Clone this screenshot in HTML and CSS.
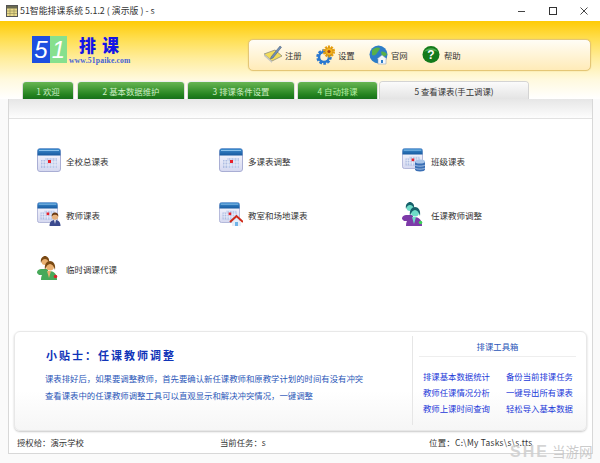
FILE: index.html
```html
<!DOCTYPE html>
<html lang="zh-CN">
<head>
<meta charset="utf-8">
<title>51智能排课系统</title>
<link rel="stylesheet" href="styles.css">
</head>
<body>
<svg class="defs" width="0" height="0" aria-hidden="true">
  <defs>
    <linearGradient id="calHead" x1="0" y1="0" x2="0" y2="1"><stop offset="0" stop-color="#3f8fd0"/><stop offset="1" stop-color="#17599f"/></linearGradient>
    <linearGradient id="calBody" x1="0" y1="0" x2="0" y2="1"><stop offset="0" stop-color="#fbfbff"/><stop offset="1" stop-color="#d5d8f0"/></linearGradient>
    <symbol id="cal" viewBox="0 0 24 24">
      <rect x="0.5" y="0.5" width="23" height="23" rx="2.5" fill="url(#calBody)" stroke="#a9aed4"/>
      <path d="M0.5 7.500V3a2.500 2.500 0 0 1 2.500-2.500h18A2.500 2.500 0 0 1 23.500 3v4.500z" fill="url(#calHead)"/>
      <path d="M2 2.500h20" stroke="#8cc2ec" stroke-width="1"/>
      <rect x="4" y="12" width="16" height="8" fill="#aebde2"/>
      <rect x="8" y="10" width="12" height="10" fill="#bccaea"/>
      <path d="M6 12v8M9 10v10M12 10v10M15 10v10M18 10v10M4 14h16M4 17h16" stroke="#f2f4fc" stroke-width="0.800"/>
      <rect x="11" y="12" width="3" height="3" fill="#e8202a"/>
    </symbol>
    <symbol id="person" viewBox="0 0 12 14">
      <path d="M0.500 14c0-4 2-6 5.500-6s5.500 2 5.500 6z" fill="#3b4a8e"/>
      <path d="M5 8l1 4 1-4z" fill="#e8e8f0"/>
      <circle cx="6" cy="4.500" r="3.200" fill="#e6b17c"/>
      <path d="M2.700 4.500C2.500 1.500 4 .5 6 .5s3.500 1 3.300 4C8.500 3 7 2.700 6 2.700S3.500 3 2.700 4.500z" fill="#6b3a12"/>
    </symbol>
    <symbol id="pair" viewBox="0 0 24 24">
      <path d="M0 17c0-3 2-4 5-4h6v6H2z" fill="var(--cloth)"/>
      <circle cx="8" cy="5.500" r="3.500" fill="var(--skin)"/>
      <path d="M4 7C3 2 6 0 8 0s5 2 4 7c-1-3-2-4-4-4S5 4 4 7z" fill="var(--hair)"/>
      <path d="M4 24c0-6 3-9 8-9s8 3 8 9z" fill="var(--cloth)"/>
      <path d="M10 15l2 7 2-7z" fill="var(--skin)"/>
      <circle cx="13" cy="10.500" r="4" fill="var(--skin)"/>
      <path d="M8 14C7 8 10 5 13 5s6 3 5 9c-1-4-3-6-5-6s-4 2-5 6z" fill="var(--hair)"/>
      <circle cx="18.500" cy="20.500" r="1.800" fill="var(--dot)"/>
    </symbol>
  </defs>
</svg>

<div class="app">
  <div class="titlebar">
    <svg class="title-icon" viewBox="0 0 12 12" aria-hidden="true">
      <rect x="0.500" y="0.500" width="11" height="11" fill="#e9d98a" stroke="#555"/>
      <rect x="1" y="1" width="10" height="2.500" fill="#6a6a50"/>
      <path d="M1 6h10M1 8.500h10M4 3.500V11M8 3.500V11" stroke="#8f8a55" stroke-width="0.600"/>
    </svg>
    <span class="title-text">51智能排课系统 5.1.2 ( 演示版 ) - s</span>
    <div class="win-controls">
      <svg class="win-btn" viewBox="0 0 10 10" aria-hidden="true"><path d="M1 5.500h7" stroke="#444" stroke-width="1"/></svg>
      <svg class="win-btn" viewBox="0 0 10 10" aria-hidden="true"><rect x="1.500" y="1.500" width="7" height="7" fill="none" stroke="#333" stroke-width="1"/></svg>
      <svg class="win-btn" viewBox="0 0 10 10" aria-hidden="true"><path d="M1.500 1.500l7 7M8.500 1.500l-7 7" stroke="#333" stroke-width="0.900"/></svg>
    </div>
  </div>

  <div class="hero">
    <div class="hero-top">
      <div class="logo">
        <div class="logo-mark"><span class="logo-5">5</span><span class="logo-1">1</span></div>
        <div class="logo-words">
          <div class="logo-cn">排 课</div>
          <div class="logo-url">www.51paike.com</div>
        </div>
      </div>
      <div class="toolbar">
        <div class="tool">
          <svg class="tool-icon" viewBox="0 0 20 20" aria-hidden="true">
            <path d="M1 9l11-4 7 6-10 5z" fill="#f1dc5a" stroke="#8d8d80" stroke-width="0.800"/>
            <path d="M1 9l8 7v2L1 11z" fill="#c7c7c0"/>
            <path d="M8 12L17 1l1.500 1.200L10 13l-2.500 1z" fill="#6f8fb8" stroke="#44566e" stroke-width="0.500"/>
          </svg>
          <span>注册</span>
        </div>
        <div class="tool">
          <svg class="tool-icon" viewBox="0 0 20 20" aria-hidden="true">
            <circle cx="8" cy="12" r="6" fill="none" stroke="#2a78d0" stroke-width="3.500" stroke-dasharray="2.400 1.300"/>
            <circle cx="8" cy="12" r="5" fill="none" stroke="#2a78d0" stroke-width="2.500"/>
            <circle cx="13" cy="6.500" r="4.800" fill="none" stroke="#e8a010" stroke-width="2.500" stroke-dasharray="2 1"/>
            <circle cx="13" cy="6.500" r="4" fill="#f2b41e" stroke="#c57c08" stroke-width="0.600"/>
            <circle cx="13" cy="6.500" r="1.600" fill="#a8420e"/>
          </svg>
          <span>设置</span>
        </div>
        <div class="tool">
          <svg class="tool-icon" viewBox="0 0 20 20" aria-hidden="true">
            <circle cx="9.500" cy="9.500" r="9" fill="#2d7dc8"/>
            <path d="M3 5c3-3 6-3 8-2 0 2-2 3-3 5s-3 3-5 2z M12 7c2-1 4 0 6 2-1 2-3 3-5 2z" fill="#58b04a"/>
            <path d="M8 14l5-4 5 4h-1v5H9v-5z" fill="#f4f7fb" stroke="#7d97b5" stroke-width="0.500"/>
            <rect x="12" y="15" width="2" height="3" fill="#2d7dc8"/>
          </svg>
          <span>官网</span>
        </div>
        <div class="tool">
          <svg class="tool-icon help" viewBox="0 0 20 20" aria-hidden="true">
            <circle cx="9" cy="9.500" r="8.500" fill="#137a1a"/>
            <path d="M2 7a7.500 6 0 0 1 14 0c-4-2-10-2-14 0z" fill="#4cab50"/>
            <text x="9" y="14" class="help-q">?</text>
          </svg>
          <span>帮助</span>
        </div>
      </div>
    </div>
    <div class="tabs">
      <div class="tab tab-1">1 欢迎</div>
      <div class="tab tab-2">2 基本数据维护</div>
      <div class="tab tab-2">3 排课条件设置</div>
      <div class="tab tab-4">4 自动排课</div>
      <div class="tab tab-active">5 查看课表(手工调课)</div>
    </div>
  </div>

  <div class="panel">
    <div class="panel-strip"></div>
    <div class="grid">
      <div class="item"><svg class="item-icon"><use href="#cal"/></svg><span>全校总课表</span></div>
      <div class="item"><svg class="item-icon"><use href="#cal"/></svg><span>多课表调整</span></div>
      <div class="item">
        <svg class="item-icon" viewBox="0 0 24 24">
          <use href="#cal" width="21" height="21"/>
          <path d="M13 13.500v8c0 1 2 2 5 2s5-1 5-2v-8z" fill="#3a6fb5"/>
          <ellipse cx="18" cy="13.500" rx="5" ry="2" fill="#a9c6ea"/>
          <path d="M13 17c1 1.500 9 1.500 10 0M13 20c1 1.500 9 1.500 10 0" stroke="#cfe0f5" fill="none" stroke-width="0.700"/>
        </svg>
        <span>班级课表</span>
      </div>
      <div class="item">
        <svg class="item-icon" viewBox="0 0 24 24">
          <use href="#cal" width="21" height="21"/>
          <use href="#person" x="12" y="10" width="12" height="14"/>
        </svg>
        <span>教师课表</span>
      </div>
      <div class="item">
        <svg class="item-icon" viewBox="0 0 24 24">
          <use href="#cal" width="21" height="21"/>
          <path d="M13 20v4h9v-4l-4.500-4z" fill="#e8eef8"/>
          <path d="M11 20l6.500-6 6.500 6" fill="none" stroke="#d02a18" stroke-width="2"/>
          <rect x="16" y="20" width="3" height="4" fill="#6eb4e8"/>
        </svg>
        <span>教室和场地课表</span>
      </div>
      <div class="item">
        <svg class="item-icon pair-teal"><use href="#pair"/></svg>
        <span>任课教师调整</span>
      </div>
      <div class="item">
        <svg class="item-icon pair-green"><use href="#pair"/></svg>
        <span>临时调课代课</span>
      </div>
    </div>

    <div class="tips">
      <div class="tips-main">
        <div class="tips-title">小贴士：任课教师调整</div>
        <p class="tips-line">课表排好后，如果要调整教师，首先要确认新任课教师和原教学计划的时间有没有冲突</p>
        <p class="tips-line">查看课表中的任课教师调整工具可以直观显示和解决冲突情况，一键调整</p>
      </div>
      <div class="toolbox">
        <div class="toolbox-title">排课工具箱</div>
        <div class="toolbox-links">
          <span>排课基本数据统计</span><span>备份当前排课任务</span>
          <span>教师任课情况分析</span><span>一键导出所有课表</span>
          <span>教师上课时间查询</span><span>轻松导入基本数据</span>
        </div>
      </div>
    </div>

    <div class="status">
      <span class="status-a">授权给：演示学校</span>
      <span class="status-b">当前任务：s</span>
      <span class="status-c">位置：C:\My Tasks\s\s.tts</span>
    </div>
  </div>

  <div class="watermark"><b>SHE</b> 当游网</div>
</div>
</body>
</html>
```

FILE: styles.css
```css
* { box-sizing: border-box; }
html, body { margin: 0; padding: 0; }
body {
  width: 600px;
  height: 463px;
  overflow: hidden;
  background: #fafafa;
  font-family: "Noto Sans CJK SC", "Liberation Sans", sans-serif;
  font-size: 8.4px;
  color: #333;
}
.defs { position: absolute; }
.app {
  position: relative;
  width: 600px;
  height: 463px;
  display: flex;
  flex-direction: column;
}

/* title bar */
.titlebar {
  height: 21px;
  flex: none;
  background: #fff;
  display: flex;
  align-items: center;
  padding-left: 6px;
}
.title-icon { width: 12px; height: 12px; margin-right: 2px; }
.title-text { font-size: 8.9px; color: #333; white-space: pre; }
.win-controls { margin-left: auto; display: flex; gap: 21px; padding-right: 11px; }
.win-btn { width: 10px; height: 10px; display: block; }

/* header */
.hero {
  flex: none;
  height: 78px;
  background: linear-gradient(#ffcb05 0%, #ffde4e 22%, #ffed9c 48%, #fff9de 75%, #ffffff 100%);
  display: flex;
  flex-direction: column;
}
.hero-top {
  height: 61px;
  flex: none;
  padding: 15px 9px 0 32px;
  display: flex;
  justify-content: space-between;
  align-items: flex-start;
}
.logo { display: flex; }
.logo-mark {
  display: flex;
  height: 27px;
  font-family: "Liberation Sans", sans-serif;
  font-style: italic;
  font-weight: 400;
  font-size: 24px;
  line-height: 27px;
  color: #fff;
  text-align: center;
}
.logo-5 { width: 18px; background: #1d4fe0; }
.logo-1 { width: 17px; background: #86e08e; }
.logo-words { margin-left: 2px; }
.logo-cn {
  font-family: "Noto Sans CJK SC", sans-serif;
  font-weight: 900;
  font-size: 17px;
  line-height: 18px;
  height: 18px;
  margin-left: 10px;
  color: #1414e6;
  letter-spacing: 1px;
  white-space: pre;
}
.logo-url {
  font-family: "Liberation Serif", serif;
  font-weight: 700;
  font-size: 7.600px;
  line-height: 14px;
  color: #3f5fd8;
  letter-spacing: 0.200px;
}
.toolbar {
  margin-top: 3px;
  width: 343px;
  height: 32px;
  border: 1px solid #e4c676;
  border-radius: 5px;
  background: linear-gradient(#fffdf6, #ffebb8);
  box-shadow: 0 0 1px #d8b860;
  padding-left: 14px;
  display: flex;
  align-items: center;
  gap: 13px;
}
.tool { display: flex; align-items: center; gap: 2px; color: #333; font-size: 8.400px; width: 40px; white-space: nowrap; }
.tool-icon { width: 20px; height: 20px; flex: none; }
.help-q {
  font-family: "Liberation Sans", sans-serif;
  font-weight: 700;
  font-size: 12px;
  fill: #fff;
  text-anchor: middle;
}

/* tabs */
.tabs {
  height: 17px;
  flex: none;
  padding-left: 23px;
  display: flex;
  gap: 4px;
}
.tab {
  height: 17px;
  border-radius: 3px 3px 0 0;
  background: linear-gradient(#68b653, #24831f 75%, #17701a);
  color: #cdeec5;
  display: flex;
  align-items: center;
  justify-content: center;
  font-size: 8.400px;
  white-space: nowrap;
  box-shadow: 0 -1px 0 #eee, 1px 0 0 #ddd, -1px 0 0 #ddd;
}
.tab-1 { width: 50px; margin-right: 1px; }
.tab-2 { width: 106px; }
.tab-4 { width: 79px; color: #b9f0a4; }
.tab-active {
  width: 148px;
  margin-left: -1px;
  background: linear-gradient(#fbfbfb, #e4e4e4);
  color: #333;
  box-shadow: 0 0 0 1px #d4d4d4;
}

/* main panel */
.panel {
  flex: 1;
  margin: 0 7px 9px 8px;
  border: 1px solid #d8d8d8;
  border-top: 0;
  background: #fff;
  display: flex;
  flex-direction: column;
}
.panel-strip {
  height: 20px;
  flex: none;
  background: linear-gradient(#e6e6e6, #fdfdfd);
  border-bottom: 1px solid #e2e2e2;
}
.grid {
  flex: none;
  padding: 29px 0 0 28px;
  display: grid;
  grid-template-columns: 182px 183px 1fr;
  grid-auto-rows: 54px;
}
.item { display: flex; align-items: flex-start; gap: 5px; white-space: nowrap; font-size: 8.500px; line-height: 26px; color: #333; }
.item-icon { width: 24px; height: 24px; flex: none; }
.pair-teal { --cloth: #7d3aa8; --skin: #6fdcc8; --hair: #16606a; --dot: #3fd05a; }
.pair-green { --cloth: #47a95a; --skin: #eab070; --hair: #7a4a14; --dot: #d8242c; }

/* tips */
.tips {
  flex: none;
  margin: auto 5px 0 5px;
  height: 100px;
  border: 1px solid #e8e8e8;
  border-radius: 6px;
  background: linear-gradient(#fff 60%, #f6f6f6);
  box-shadow: 0 1px 2px #c8c8c8;
  display: flex;
}
.tips-main { width: 397px; padding: 17px 0 0 30px; flex: none; white-space: nowrap; }
.tips-title {
  font-family: "Liberation Serif", "Noto Sans CJK SC", serif;
  font-weight: 700;
  font-size: 11px;
  line-height: 15px;
  letter-spacing: 2px;
  color: #1034b8;
  margin: 0 0 6px 1px;
}
.tips-line { margin: 0; line-height: 17px; color: #2a56b8; font-size: 8.400px; }
.toolbox {
  flex: 1;
  margin: 4px 0 5px;
  border-left: 1px solid #e6e6e6;
  padding: 0 10px 0 6px;
  display: flex;
  flex-direction: column;
}
.toolbox-title {
  height: 21px;
  line-height: 20px;
  text-align: center;
  color: #2a56b8;
  border-bottom: 1px solid #eee;
}
.toolbox-links {
  margin-top: 11px;
  padding-left: 4px;
  display: grid;
  grid-template-columns: 83px 1fr;
  grid-auto-rows: 16px;
  line-height: 16px;
  color: #2238d8;
  white-space: nowrap;
}

/* status */
.status {
  flex: none;
  height: 22px;
  line-height: 23px;
  display: flex;
  white-space: nowrap;
  color: #333;
  padding-left: 8px;
}
.status-a { width: 203px; }
.status-b { width: 209px; }
.status-c { letter-spacing: 0.3px; }

/* watermark */
.watermark {
  position: absolute;
  left: 510px;
  top: 441px;
  font-size: 13.500px;
  line-height: 20px;
  color: rgba(190, 190, 190, 0.8);
  white-space: nowrap;
}
.watermark b {
  font-family: "Liberation Sans", sans-serif;
  font-weight: 700;
  font-size: 16px;
  letter-spacing: 2px;
  color: rgba(205, 205, 205, 0.85);
}
```
